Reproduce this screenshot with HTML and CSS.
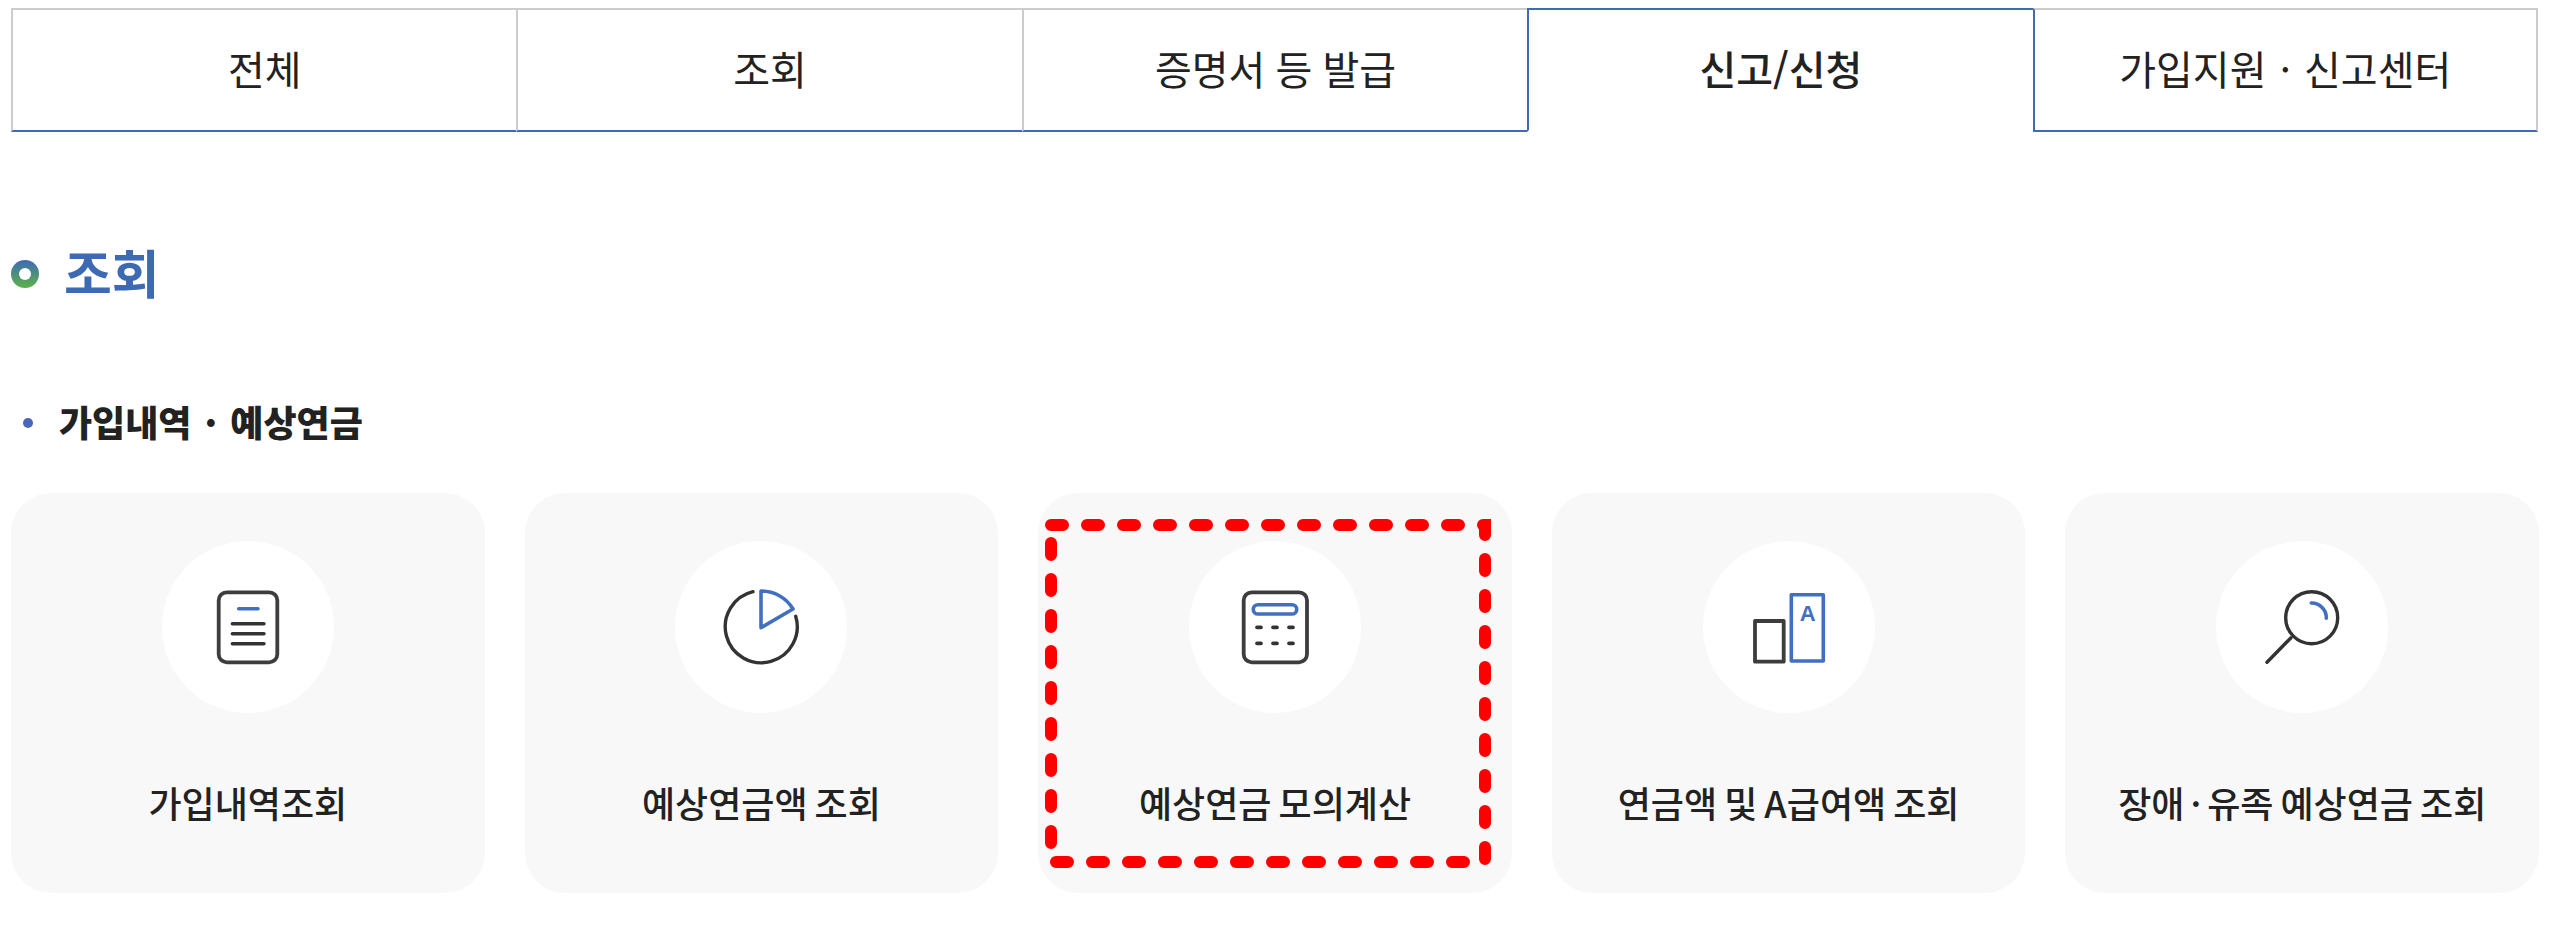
FILE: index.html
```html
<!DOCTYPE html>
<html lang="ko">
<head>
    <meta charset="UTF-8">
    <meta name="viewport" content="width=device-width, initial-scale=1.0">
    <title>조회</title>
    <link rel="stylesheet" href="styles.css">
</head>
<body>
    <div class="wrap">
        <ul class="tabs">
            <li class="tab">전체</li>
            <li class="tab">조회</li>
            <li class="tab">증명서 등 발급</li>
            <li class="tab active">신고/신청</li>
            <li class="tab">가입지원 <span class="dot">·</span> 신고센터</li>
        </ul>

        <h2 class="title"><span class="ring"></span>조회</h2>
        <h3 class="subtitle"><span class="bullet"></span><span>가입내역 <span class="dot">·</span> 예상연금</span></h3>

        <div class="cards">
            <a class="card">
                <span class="circle">
                    <svg class="icon" viewBox="0 0 172 172">
                        <rect class="ink" x="56.7" y="51.3" width="58.6" height="70" rx="8"/>
                        <path class="blue" d="M76.7 67.7H96"/>
                        <path class="ink thin" d="M70.3 82.7H102M70.3 92.7H102M70.3 102.7H102"/>
                    </svg>
                </span>
                <span class="label">가입내역조회</span>
            </a>
            <a class="card">
                <span class="circle">
                    <svg class="icon" viewBox="0 0 172 172">
                        <path class="ink thin" d="M78 50.7A36 36 0 1 0 120.7 75.3"/>
                        <path class="blue" d="M86 86.7V50A37 37 0 0 1 118 68Z"/>
                    </svg>
                </span>
                <span class="label">예상연금액 조회</span>
            </a>
            <a class="card">
                <span class="circle">
                    <svg class="icon" viewBox="0 0 172 172">
                        <rect class="ink" x="54.7" y="51.3" width="63.3" height="70" rx="8"/>
                        <rect class="blue" x="64.3" y="63.7" width="43.4" height="9.3" rx="4.6"/>
                        <path class="ink thin key" d="M68 86.3H72M84 86.3H88M100 86.3H104M68 102.3H72M84 102.3H88M100 102.3H104"/>
                    </svg>
                </span>
                <span class="label">예상연금 모의계산</span>
                <!-- 빨간 점선 표시 -->
                <svg class="mark" viewBox="0 0 474 400">
                    <path d="M13 32H447V369H13V32"/>
                </svg>
            </a>
            <a class="card">
                <span class="circle">
                    <svg class="icon" viewBox="0 0 172 172">
                        <rect class="ink square" x="52" y="80" width="28.7" height="40.7"/>
                        <rect class="blue square" x="88.3" y="53.7" width="32" height="66.3"/>
                        <text class="letter" x="104.7" y="80.3">A</text>
                    </svg>
                </span>
                <span class="label">연금액 및 A급여액 조회</span>
            </a>
            <a class="card">
                <span class="circle">
                    <svg class="icon" viewBox="0 0 172 172">
                        <circle class="ink thin" cx="95.7" cy="76.7" r="26"/>
                        <path class="ink thin" d="M75 96.7L51 121.3"/>
                        <path class="blue" d="M95.3 62A14.7 14.7 0 0 1 110.3 77.3"/>
                    </svg>
                </span>
                <span class="label">장애<span class="dot">·</span>유족 예상연금 조회</span>
            </a>
        </div>
    </div>
</body>
</html>
```

FILE: styles.css
```css
/* ==================================== */
/* 기본 */
/* ==================================== */
body {
    margin: 0;
    background-color: #fff;
    color: #222;
    font-family: "Noto Sans CJK KR", "Noto Sans", sans-serif;
}

.wrap {
    width: 2528px;
    margin-left: 11px;
    padding-top: 8px;
}

.dot {
    margin: 0 3px;
}

/* ==================================== */
/* 상단 탭 */
/* ==================================== */
.tabs {
    display: grid;
    grid-template-columns: repeat(5, 505.4px);
    height: 124px;
    margin: 0;
    padding: 0;
    list-style: none;
}

.tab {
    display: block;
    box-sizing: border-box;
    border: 2px solid #ccc;
    border-right: 0;
    border-bottom-color: #3f6ab5;
    font-size: 40px;
    line-height: 116px;
    text-align: center;
    word-spacing: -1px;
}

.tab:last-child {
    border-right: 2px solid #ccc;
}

.tab.active {
    border-color: #3f6ab5;
    border-bottom-color: #fff;
    font-weight: 500;
}

.tab.active + .tab {
    border-left-color: #3f6ab5;
}

/* ==================================== */
/* 제목 */
/* ==================================== */
.title {
    display: flex;
    align-items: center;
    gap: 25px;
    height: 60px;
    margin: 110px 0 0;
    color: #3e69b3;
    font-size: 52px;
    font-weight: 700;
    line-height: 60px;
}

.ring {
    display: flex;
    justify-content: center;
    align-items: center;
    width: 28px;
    height: 28px;
    margin-top: 3px;
    border-radius: 50%;
    background: linear-gradient(#3f6ab5, #5cb247);
}

.ring::before {
    content: '';
    width: 12px;
    height: 12px;
    border-radius: 50%;
    background-color: #fff;
}

.subtitle {
    display: flex;
    align-items: center;
    gap: 26px;
    height: 50px;
    margin: 94px 0 0;
    padding-left: 12px;
    font-size: 36px;
    font-weight: 900;
    line-height: 50px;
}

.bullet {
    width: 10px;
    height: 10px;
    margin-top: 3px;
    border-radius: 50%;
    background-color: #4a66b8;
}

/* ==================================== */
/* 카드 */
/* ==================================== */
.cards {
    display: grid;
    grid-template-columns: repeat(5, 1fr);
    gap: 40px;
    margin-top: 47px;
}

.card {
    position: relative;
    display: flex;
    flex-direction: column;
    align-items: center;
    box-sizing: border-box;
    height: 400px;
    padding-top: 48px;
    border-radius: 40px;
    background-color: #f8f8f8;
}

.circle {
    width: 172px;
    height: 172px;
    border-radius: 50%;
    background-color: #fff;
}

.icon {
    display: block;
    width: 172px;
    height: 172px;
    fill: none;
}

.ink {
    stroke: #3d3d3d;
    stroke-width: 3.8;
}

.thin {
    stroke: #333;
    stroke-width: 3.4;
    stroke-linecap: round;
}

.key {
    stroke-width: 3.8;
}

.blue {
    stroke: #4270c0;
    stroke-width: 3.6;
    stroke-linecap: round;
    stroke-linejoin: round;
}

.square {
    stroke-linejoin: round;
}

.letter {
    fill: #4270c0;
    font-family: "Liberation Sans", sans-serif;
    font-size: 22px;
    font-weight: 700;
    text-anchor: middle;
}

.label {
    margin-top: 64px;
    font-size: 36px;
    font-weight: 500;
    line-height: 50px;
    word-spacing: -3px;
}

.label .dot {
    margin: 0 6px;
}

/* 강조 표시 (카드 위에 겹침) */
.mark {
    position: absolute;
    top: 0;
    left: 0;
    width: 474px;
    height: 400px;
    fill: none;
}

.mark path {
    stroke: #f00;
    stroke-width: 12;
    stroke-linecap: round;
    stroke-dasharray: 12 24;
}
```
